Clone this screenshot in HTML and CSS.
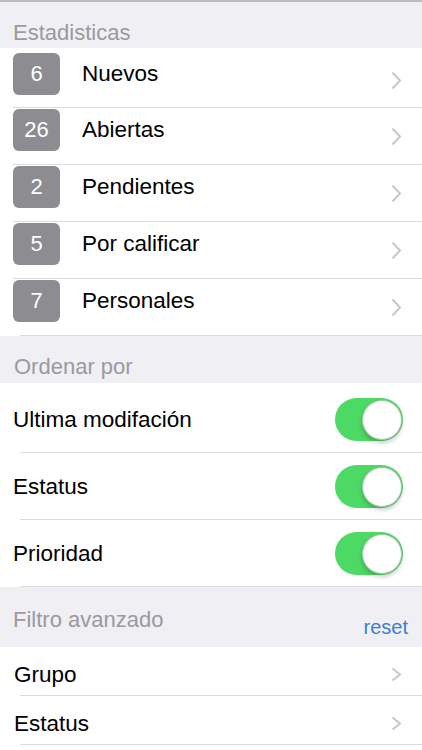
FILE: index.html
```html
<!DOCTYPE html>
<html lang="es">
<head>
    <meta charset="UTF-8">
    <title>Filtros</title>
    <meta name="viewport" content="width=device-width, initial-scale=1.0">
    <link rel="stylesheet" href="styles.css">
</head>
<body>
    <div class="topbar"></div>

    <div class="section-title stats-title">Estadisticas</div>
    <div class="list">
        <div class="row stat first">
            <span class="badge">6</span>
            <span class="label">Nuevos</span>
            <svg class="chevron" viewBox="0 0 11 19"><path d="M1.5 1.5 L9 9.5 L1.5 17.5"/></svg>
        </div>
        <div class="row stat">
            <span class="badge">26</span>
            <span class="label">Abiertas</span>
            <svg class="chevron" viewBox="0 0 11 19"><path d="M1.5 1.5 L9 9.5 L1.5 17.5"/></svg>
        </div>
        <div class="row stat">
            <span class="badge">2</span>
            <span class="label">Pendientes</span>
            <svg class="chevron" viewBox="0 0 11 19"><path d="M1.5 1.5 L9 9.5 L1.5 17.5"/></svg>
        </div>
        <div class="row stat">
            <span class="badge">5</span>
            <span class="label">Por calificar</span>
            <svg class="chevron" viewBox="0 0 11 19"><path d="M1.5 1.5 L9 9.5 L1.5 17.5"/></svg>
        </div>
        <div class="row stat last">
            <span class="badge">7</span>
            <span class="label">Personales</span>
            <svg class="chevron" viewBox="0 0 11 19"><path d="M1.5 1.5 L9 9.5 L1.5 17.5"/></svg>
        </div>
    </div>

    <div class="section-title order-title">Ordenar por</div>
    <div class="list">
        <div class="row toggle first">
            <span class="label">Ultima modifación</span>
            <span class="switch"><span class="knob"></span></span>
        </div>
        <div class="row toggle">
            <span class="label">Estatus</span>
            <span class="switch"><span class="knob"></span></span>
        </div>
        <div class="row toggle">
            <span class="label">Prioridad</span>
            <span class="switch"><span class="knob"></span></span>
        </div>
    </div>

    <div class="section-title filter-title">
        <span class="filter-name">Filtro avanzado</span>
        <a class="reset" href="#">reset</a>
    </div>
    <div class="list">
        <div class="row link">
            <span class="label">Grupo</span>
            <svg class="chevron small" viewBox="0 0 11 15"><path d="M1.5 1.5 L9 7.5 L1.5 13.5"/></svg>
        </div>
        <div class="row link">
            <span class="label">Estatus</span>
            <svg class="chevron small" viewBox="0 0 11 15"><path d="M1.5 1.5 L9 7.5 L1.5 13.5"/></svg>
        </div>
    </div>
</body>
</html>
```

FILE: styles.css
```css
body {
    margin: 0;
    font-family: "Liberation Sans", Arial, sans-serif;
    background: #fff;
    color: #000;
}
.topbar {
    height: 2px;
    background: #bdbdc1;
}
.section-title {
    display: flex;
    align-items: flex-end;
    box-sizing: border-box;
    background: #efeff4;
    color: #9a9a9f;
    font-size: 22px;
    line-height: 22px;
    padding: 0 14px 0 13px;
}
.stats-title {
    height: 46px;
    padding-bottom: 4px;
}
.order-title {
    height: 47px;
    padding-bottom: 5px;
    padding-left: 14px;
}
.filter-title {
    height: 60px;
    justify-content: space-between;
}
.filter-name {
    margin-bottom: 16px;
}
.reset {
    color: #3a7fd5;
    font-size: 20px;
    line-height: 20px;
    text-decoration: none;
    margin-bottom: 10px;
}

/* rows with an inset separator line */
.row {
    --inset: 20px;
    display: flex;
    align-items: center;
    box-sizing: border-box;
    background-image: linear-gradient(#dcdce0, #dcdce0);
    background-repeat: no-repeat;
    background-position: left var(--inset) bottom;
    background-size: calc(100% - var(--inset)) 1px;
    font-size: 22.5px;
}
.stat {
    --inset: 13px;
    height: 57px;
    align-items: flex-start;
    padding: 0 20px 0 13px;
}
.stat.first {
    height: 60px;
    padding-top: 4px;
}
.stat.last {
    --inset: 20px;
}
.badge {
    width: 47px;
    height: 42px;
    margin-top: 1px;
    border-radius: 6px;
    background: #8c8c91;
    color: #fff;
    font-size: 22px;
    text-align: center;
    line-height: 42px;
}
.stat .label {
    margin: 1px 0 0 22px;
    line-height: 42px;
}
.chevron {
    width: 11px;
    height: 19px;
    margin-left: auto;
    align-self: center;
    fill: none;
    stroke: #c7c7cc;
    stroke-width: 2;
}
.chevron.small {
    height: 15px;
}

.toggle {
    height: 67px;
    padding: 0 19px 0 13px;
}
.toggle.first {
    height: 70px;
    padding-top: 3px;
}
.switch {
    display: flex;
    justify-content: flex-end;
    align-items: center;
    margin-left: auto;
    width: 68px;
    height: 43px;
    border-radius: 22px;
    background: #4cd964;
}
.knob {
    width: 40px;
    height: 40px;
    margin-right: 1px;
    border-radius: 50%;
    background: #fff;
    box-sizing: border-box;
    border: 1px solid rgba(40, 120, 50, 0.4);
    box-shadow: 0 3px 4px rgba(0, 0, 0, 0.2);
}

.link {
    height: 49px;
    padding: 6px 20px 0 14px;
}
```
